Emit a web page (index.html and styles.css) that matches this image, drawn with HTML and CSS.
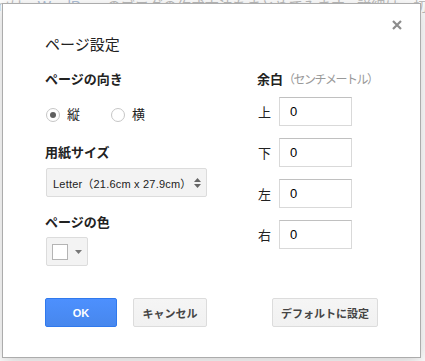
FILE: index.html
```html
<!DOCTYPE html>
<html lang="ja">
<head>
  <meta charset="UTF-8">
  <meta name="viewport" content="width=device-width, initial-scale=1.0">
  <title>ページ設定</title>
  <link rel="stylesheet" href="styles.css">
</head>
<body>
  <div class="doc">
    <p>ntは、<span class="doc-link">WordPress</span>のブログの作成方法をまとめてみます。詳細は、初心者の方でも</p>
  </div>

  <div class="dialog">
    <button class="close" title="閉じる">
      <svg width="10" height="10" viewBox="0 0 10 10"><path d="M1 1L9 9M9 1L1 9" stroke="#8c8c8c" stroke-width="2.2"/></svg>
    </button>

    <h2 class="title">ページ設定</h2>

    <div class="columns">
      <div class="col-left">
        <h3 class="label">ページの向き</h3>
        <div class="radios">
          <label class="radio"><span class="radio-circle checked"></span>縦</label>
          <label class="radio"><span class="radio-circle"></span>横</label>
        </div>

        <h3 class="label label-size">用紙サイズ</h3>
        <div class="select">
          <span class="select-text">Letter（21.6cm x 27.9cm）</span>
          <svg class="select-arrows" width="7" height="10" viewBox="0 0 7 10"><path d="M3.5 0L7 4H0Z M3.5 10L0 6H7Z" fill="#666"/></svg>
        </div>

        <h3 class="label label-color">ページの色</h3>
        <div class="color-btn">
          <span class="swatch"></span>
          <svg class="caret" width="7" height="4" viewBox="0 0 7 4"><path d="M0 0H7L3.5 4Z" fill="#777"/></svg>
        </div>
      </div>

      <div class="col-right">
        <h3 class="label label-margin">余白<span class="unit">（センチメートル）</span></h3>
        <div class="margin-row"><span class="side">上</span><input class="num" type="text" value="0"></div>
        <div class="margin-row"><span class="side">下</span><input class="num" type="text" value="0"></div>
        <div class="margin-row"><span class="side">左</span><input class="num" type="text" value="0"></div>
        <div class="margin-row"><span class="side">右</span><input class="num" type="text" value="0"></div>
      </div>
    </div>

    <div class="footer">
      <button class="btn btn-primary">OK</button>
      <button class="btn btn-cancel">キャンセル</button>
      <button class="btn btn-default">デフォルトに設定</button>
    </div>
  </div>
</body>
</html>
```

FILE: styles.css
```css
* {
  margin: 0;
  padding: 0;
  box-sizing: border-box;
}

body {
  font-family: Arial, "Liberation Sans", "Noto Sans CJK JP", sans-serif;
  font-size: 13px;
  color: #222;
  background: #fff;
  width: 425px;
  height: 361px;
  overflow: hidden;
  position: relative;
}

/* faded document behind the modal */
.doc {
  margin-top: -12px;
  margin-left: -2px;
  color: #bdbdbd;
  font-size: 14px;
  line-height: 36px;
  white-space: nowrap;
}

.doc-link {
  color: #aec0d8;
}

.dialog {
  position: absolute;
  left: 2px;
  top: 3px;
  width: 419px;
  height: 355px;
  background: #fff;
  border: 1px solid #acacac;
  box-shadow: 0 4px 16px rgba(0, 0, 0, 0.2);
  padding: 31px 42px 0 42px;
}

.close {
  position: absolute;
  top: 13px;
  right: 15px;
  width: 16px;
  height: 16px;
  border: none;
  background: none;
  display: flex;
  justify-content: center;
  align-items: center;
  cursor: pointer;
}

.title {
  font-size: 15px;
  font-weight: normal;
  line-height: 20px;
  color: #222;
}

.columns {
  display: grid;
  grid-template-columns: 212px 1fr;
  margin-top: 17px;
}

.label {
  font-size: 13px;
  font-weight: bold;
  line-height: 16px;
  color: #222;
  white-space: nowrap;
}

.unit {
  font-weight: normal;
  color: #999;
  font-size: 12px;
  letter-spacing: -1.5px;
}

.radios {
  display: flex;
  gap: 30px;
  margin-top: 19px;
  height: 16px;
}

.radio {
  display: flex;
  align-items: center;
  gap: 7px;
  line-height: 16px;
}

.radio-circle {
  width: 14px;
  height: 14px;
  margin-left: 1px;
  border: 1px solid #c6c6c6;
  border-radius: 50%;
  display: flex;
  justify-content: center;
  align-items: center;
}

.radio-circle.checked::after {
  content: '';
  width: 6px;
  height: 6px;
  border-radius: 50%;
  background: #606060;
}

.label-size {
  margin-top: 22px;
}

.select {
  margin-top: 7px;
  margin-left: 1px;
  width: 161px;
  height: 29px;
  background: #f3f3f3;
  border: 1px solid #dcdcdc;
  border-radius: 2px;
  display: flex;
  align-items: center;
  justify-content: space-between;
  padding: 0 5px 0 6px;
  font-size: 11px;
  color: #222;
}

.select-text {
  white-space: nowrap;
  letter-spacing: 0.2px;
}

.label-color {
  margin-top: 18px;
}

.color-btn {
  margin-top: 6px;
  margin-left: 1px;
  width: 42px;
  height: 29px;
  background: #f3f3f3;
  border: 1px solid #dcdcdc;
  border-radius: 2px;
  display: flex;
  align-items: center;
  gap: 7px;
  padding-left: 5px;
}

.swatch {
  width: 16px;
  height: 16px;
  background: #fff;
  border: 1px solid #b4b4b4;
}

.margin-row {
  display: flex;
  align-items: center;
  margin-top: 12px;
}

.label + .margin-row {
  margin-top: 9px;
}

.side {
  width: 22px;
  font-size: 13px;
  padding-left: 1px;
}

.num {
  width: 73px;
  height: 29px;
  border: 1px solid #d9d9d9;
  border-top-color: #c0c0c0;
  padding-left: 10px;
  font-family: Arial, "Liberation Sans", sans-serif;
  font-size: 13px;
  color: #000;
  outline: none;
}

.footer {
  display: flex;
  gap: 16px;
  margin-top: 32px;
}

.btn {
  height: 29px;
  min-width: 72px;
  padding: 0 8px;
  border: 1px solid #dcdcdc;
  border-radius: 2px;
  background: linear-gradient(#f5f5f5, #f1f1f1);
  font-family: Arial, "Liberation Sans", "Noto Sans CJK JP", sans-serif;
  font-size: 11px;
  font-weight: bold;
  color: #444;
  cursor: pointer;
}

.btn-cancel {
  min-width: 74px;
}

.btn-primary {
  background: linear-gradient(#4d90fe, #4787ed);
  border-color: #3079ed;
  color: #fff;
}

.btn-default {
  margin-left: auto;
}
```
